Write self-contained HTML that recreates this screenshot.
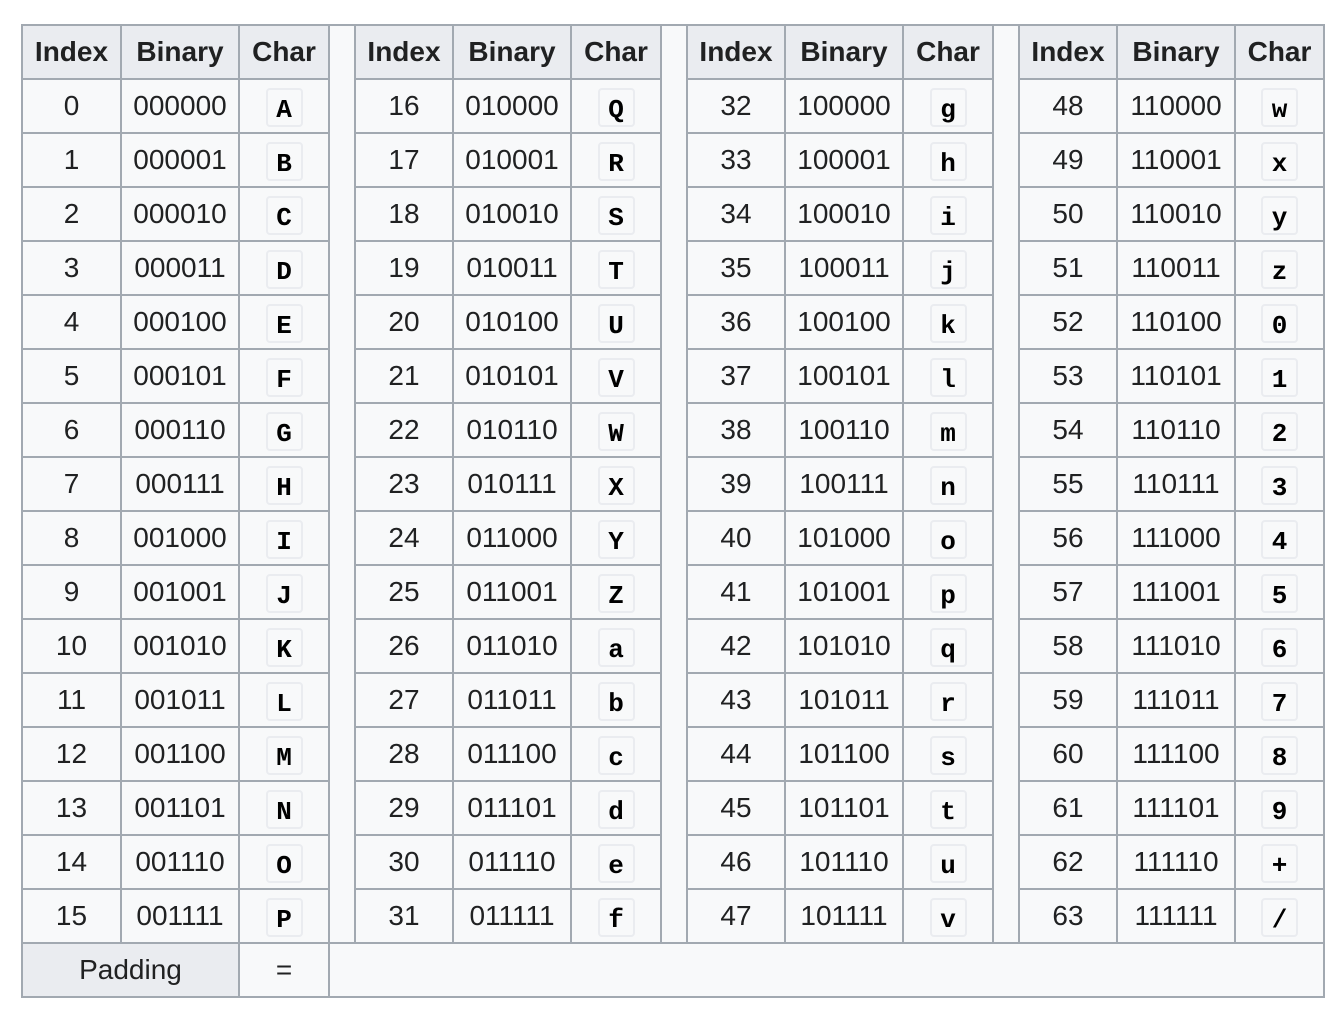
<!DOCTYPE html>
<html><head><meta charset="utf-8"><style>
body{margin:0;background:#fff;width:1338px;height:1016px;overflow:hidden}
table{position:absolute;left:21px;top:24px;border-collapse:collapse;table-layout:fixed;width:1302px;font-family:"Liberation Sans",Arial,sans-serif;font-size:28px;color:#202122;background:#f8f9fa}
td,th{border:2px solid #a2a9b1;height:50px;padding:0;text-align:center;box-sizing:border-box}
th{background:#eaecf0;font-weight:bold}
tr{height:54px}
.sp{background:#f8f9fa}
code{display:inline-block;width:33px;height:35px;line-height:40px;background:#f8f9fa;border:2px solid #eaecf0;border-radius:4px;font-family:"Liberation Mono","Courier New",monospace;font-size:26px;font-weight:bold;color:#000;vertical-align:middle;box-sizing:content-box;margin-top:3px}
.pad{background:#eaecf0}
</style></head><body>
<table>
<colgroup><col style="width:99px"><col style="width:118px"><col style="width:90px"><col style="width:26px"><col style="width:98px"><col style="width:118px"><col style="width:90px"><col style="width:26px"><col style="width:98px"><col style="width:118px"><col style="width:90px"><col style="width:26px"><col style="width:98px"><col style="width:118px"><col style="width:89px"></colgroup>
<tr><th>Index</th><th>Binary</th><th>Char</th><td class="sp" rowspan="17"></td><th>Index</th><th>Binary</th><th>Char</th><td class="sp" rowspan="17"></td><th>Index</th><th>Binary</th><th>Char</th><td class="sp" rowspan="17"></td><th>Index</th><th>Binary</th><th>Char</th></tr>
<tr><td>0</td><td>000000</td><td><code>A</code></td><td>16</td><td>010000</td><td><code>Q</code></td><td>32</td><td>100000</td><td><code>g</code></td><td>48</td><td>110000</td><td><code>w</code></td></tr>
<tr><td>1</td><td>000001</td><td><code>B</code></td><td>17</td><td>010001</td><td><code>R</code></td><td>33</td><td>100001</td><td><code>h</code></td><td>49</td><td>110001</td><td><code>x</code></td></tr>
<tr><td>2</td><td>000010</td><td><code>C</code></td><td>18</td><td>010010</td><td><code>S</code></td><td>34</td><td>100010</td><td><code>i</code></td><td>50</td><td>110010</td><td><code>y</code></td></tr>
<tr><td>3</td><td>000011</td><td><code>D</code></td><td>19</td><td>010011</td><td><code>T</code></td><td>35</td><td>100011</td><td><code>j</code></td><td>51</td><td>110011</td><td><code>z</code></td></tr>
<tr><td>4</td><td>000100</td><td><code>E</code></td><td>20</td><td>010100</td><td><code>U</code></td><td>36</td><td>100100</td><td><code>k</code></td><td>52</td><td>110100</td><td><code>0</code></td></tr>
<tr><td>5</td><td>000101</td><td><code>F</code></td><td>21</td><td>010101</td><td><code>V</code></td><td>37</td><td>100101</td><td><code>l</code></td><td>53</td><td>110101</td><td><code>1</code></td></tr>
<tr><td>6</td><td>000110</td><td><code>G</code></td><td>22</td><td>010110</td><td><code>W</code></td><td>38</td><td>100110</td><td><code>m</code></td><td>54</td><td>110110</td><td><code>2</code></td></tr>
<tr><td>7</td><td>000111</td><td><code>H</code></td><td>23</td><td>010111</td><td><code>X</code></td><td>39</td><td>100111</td><td><code>n</code></td><td>55</td><td>110111</td><td><code>3</code></td></tr>
<tr><td>8</td><td>001000</td><td><code>I</code></td><td>24</td><td>011000</td><td><code>Y</code></td><td>40</td><td>101000</td><td><code>o</code></td><td>56</td><td>111000</td><td><code>4</code></td></tr>
<tr><td>9</td><td>001001</td><td><code>J</code></td><td>25</td><td>011001</td><td><code>Z</code></td><td>41</td><td>101001</td><td><code>p</code></td><td>57</td><td>111001</td><td><code>5</code></td></tr>
<tr><td>10</td><td>001010</td><td><code>K</code></td><td>26</td><td>011010</td><td><code>a</code></td><td>42</td><td>101010</td><td><code>q</code></td><td>58</td><td>111010</td><td><code>6</code></td></tr>
<tr><td>11</td><td>001011</td><td><code>L</code></td><td>27</td><td>011011</td><td><code>b</code></td><td>43</td><td>101011</td><td><code>r</code></td><td>59</td><td>111011</td><td><code>7</code></td></tr>
<tr><td>12</td><td>001100</td><td><code>M</code></td><td>28</td><td>011100</td><td><code>c</code></td><td>44</td><td>101100</td><td><code>s</code></td><td>60</td><td>111100</td><td><code>8</code></td></tr>
<tr><td>13</td><td>001101</td><td><code>N</code></td><td>29</td><td>011101</td><td><code>d</code></td><td>45</td><td>101101</td><td><code>t</code></td><td>61</td><td>111101</td><td><code>9</code></td></tr>
<tr><td>14</td><td>001110</td><td><code>O</code></td><td>30</td><td>011110</td><td><code>e</code></td><td>46</td><td>101110</td><td><code>u</code></td><td>62</td><td>111110</td><td><code>+</code></td></tr>
<tr><td>15</td><td>001111</td><td><code>P</code></td><td>31</td><td>011111</td><td><code>f</code></td><td>47</td><td>101111</td><td><code>v</code></td><td>63</td><td>111111</td><td><code>/</code></td></tr>
<tr><td class="pad" colspan="2">Padding</td><td>=</td><td colspan="12"></td></tr>
</table>
</body></html>
